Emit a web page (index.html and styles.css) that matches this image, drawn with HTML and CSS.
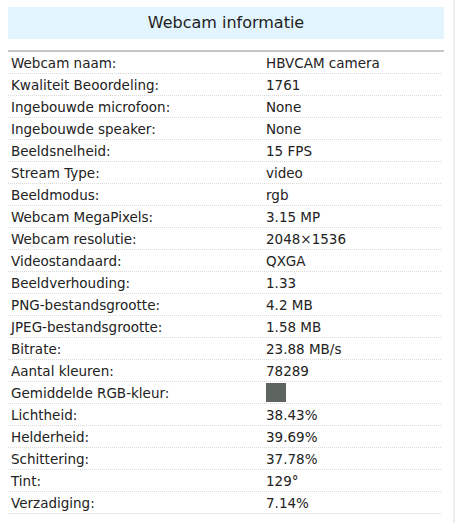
FILE: index.html
```html
<!DOCTYPE html>
<html>
<head>
<meta charset="utf-8">
<link rel="stylesheet" href="styles.css">
</head>
<body>
<div class="page">
  <div class="title">Webcam informatie</div>
  <div class="sep"></div>
  <div class="table">
    <div class="row"><div class="k">Webcam naam:</div><div class="v">HBVCAM camera</div></div>
    <div class="row"><div class="k">Kwaliteit Beoordeling:</div><div class="v">1761</div></div>
    <div class="row"><div class="k">Ingebouwde microfoon:</div><div class="v">None</div></div>
    <div class="row"><div class="k">Ingebouwde speaker:</div><div class="v">None</div></div>
    <div class="row"><div class="k">Beeldsnelheid:</div><div class="v">15 FPS</div></div>
    <div class="row"><div class="k">Stream Type:</div><div class="v">video</div></div>
    <div class="row"><div class="k">Beeldmodus:</div><div class="v">rgb</div></div>
    <div class="row"><div class="k">Webcam MegaPixels:</div><div class="v">3.15 MP</div></div>
    <div class="row"><div class="k">Webcam resolutie:</div><div class="v">2048×1536</div></div>
    <div class="row"><div class="k">Videostandaard:</div><div class="v">QXGA</div></div>
    <div class="row"><div class="k">Beeldverhouding:</div><div class="v">1.33</div></div>
    <div class="row"><div class="k">PNG-bestandsgrootte:</div><div class="v">4.2 MB</div></div>
    <div class="row"><div class="k">JPEG-bestandsgrootte:</div><div class="v">1.58 MB</div></div>
    <div class="row"><div class="k">Bitrate:</div><div class="v">23.88 MB/s</div></div>
    <div class="row"><div class="k">Aantal kleuren:</div><div class="v">78289</div></div>
    <div class="row"><div class="k">Gemiddelde RGB-kleur:</div><div class="v"><span class="swatch"></span></div></div>
    <div class="row"><div class="k">Lichtheid:</div><div class="v">38.43%</div></div>
    <div class="row"><div class="k">Helderheid:</div><div class="v">39.69%</div></div>
    <div class="row"><div class="k">Schittering:</div><div class="v">37.78%</div></div>
    <div class="row"><div class="k">Tint:</div><div class="v">129°</div></div>
    <div class="row last"><div class="k">Verzadiging:</div><div class="v">7.14%</div></div>
  </div>
</div>
</body>
</html>
```

FILE: styles.css
```css
html, body {
  margin: 0;
  padding: 0;
  background: #fff;
}
body {
  font-family: "DejaVu Sans", Verdana, sans-serif;
  color: #222;
}
.page {
  box-sizing: border-box;
  width: 455px;
  min-height: 523px;
  padding: 7px 0 0 8px;
  border-right: 2px solid #eeeeee;
}
.title {
  width: 436px;
  height: 32px;
  line-height: 32px;
  background: #e2f4fd;
  text-align: center;
  font-size: 16px;
  color: #1e1e1e;
}
.sep {
  width: 436px;
  height: 2px;
  margin-top: 11px;
  background: #c6c6c6;
}
.table {
  width: 433px;
}
.row {
  display: grid;
  grid-template-columns: 255px 1fr;
  height: 21px;
  align-items: center;
  border-bottom: 1px dotted #d9d9d9;
  font-size: 13.5px;
}
.row.last {
  border-bottom: 1px solid #e6e6e6;
}
.k {
  padding-left: 3px;
  white-space: nowrap;
}
.v {
  padding-left: 3px;
  white-space: nowrap;
  display: flex;
  align-items: center;
}
.swatch {
  display: inline-block;
  width: 20px;
  height: 19px;
  background: rgb(94, 101, 95);
}
```
